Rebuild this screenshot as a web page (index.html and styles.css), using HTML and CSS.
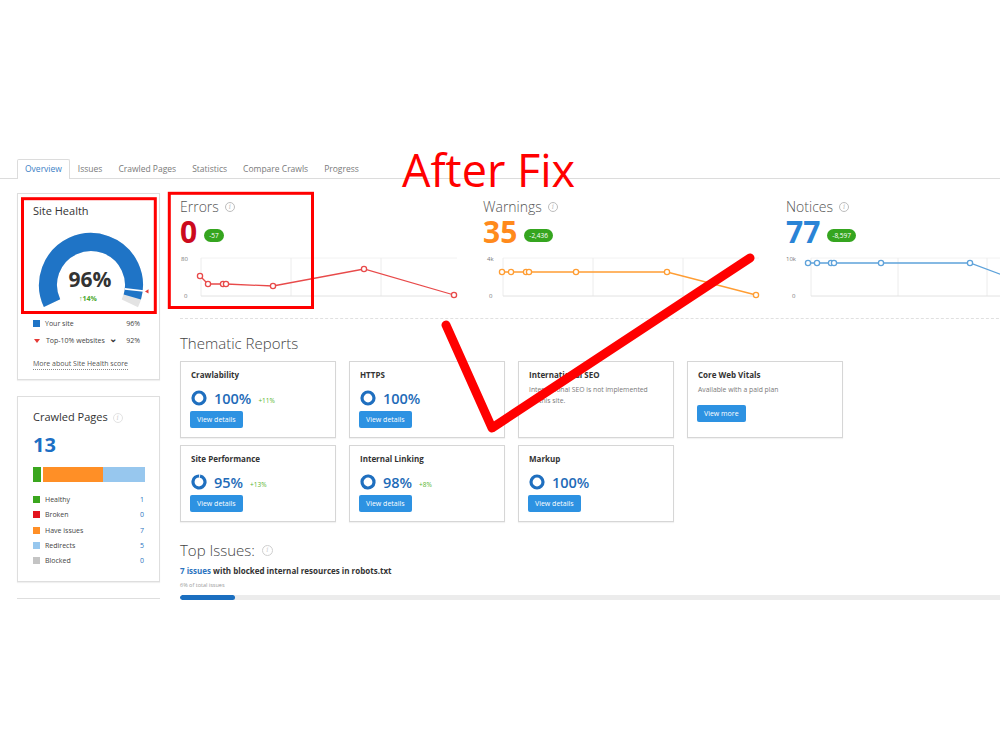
FILE: index.html
```html
<!DOCTYPE html>
<html lang="en">
<head>
<meta charset="utf-8">
<title>Site Audit – Overview</title>
<link rel="stylesheet" href="styles.css">
</head>
<body>
<div class="page">
  <nav class="tabs">
    <span class="tab active">Overview</span>
    <span class="tab">Issues</span>
    <span class="tab">Crawled Pages</span>
    <span class="tab">Statistics</span>
    <span class="tab">Compare Crawls</span>
    <span class="tab">Progress</span>
  </nav>

  <div class="layout">
    <aside class="side">
      <section class="card health">
        <h3 class="card-title">Site Health</h3>
        <svg class="gauge" width="111" height="86" viewBox="0 0 111 86">
          <g transform="rotate(155 58 59)">
            <circle cx="58" cy="59" r="43" fill="none" stroke="#e3e3e3" stroke-width="18" stroke-dasharray="172.6 400"/>
            <circle cx="58" cy="59" r="43" fill="none" stroke="#1f74c6" stroke-width="18" stroke-dasharray="165.7 400"/>
          </g>
          <line x1="91.8" y1="62.9" x2="110.7" y2="65" stroke="#fff" stroke-width="1.6"/>
          <path d="M112 65.4 L115.5 63.2 L115.5 67.6 Z" fill="#e53935"/>
          <text x="57" y="61" text-anchor="middle" class="gauge-value">96%</text>
          <text x="55" y="75" text-anchor="middle" class="gauge-delta">↑14%</text>
        </svg>
        <ul class="legend">
          <li><span class="swatch swatch-blue"></span>Your site<span class="legend-value">96%</span></li>
          <li><span class="tri-down"></span>Top-10% websites<span class="chev">&#8964;</span><span class="legend-value">92%</span></li>
        </ul>
        <a class="more-link">More about Site Health score</a>
      </section>

      <section class="card crawled">
        <h3 class="card-title">Crawled Pages <span class="info info-faint">i</span></h3>
        <div class="crawled-count">13</div>
        <div class="stack">
          <span class="seg seg-green" style="flex: 1"></span>
          <span class="seg seg-orange" style="flex: 7"></span>
          <span class="seg seg-light" style="flex: 5"></span>
        </div>
        <ul class="status-list">
          <li><span class="swatch swatch-green"></span>Healthy<span class="status-value">1</span></li>
          <li><span class="swatch swatch-red"></span>Broken<span class="status-value">0</span></li>
          <li><span class="swatch swatch-orange"></span>Have issues<span class="status-value">7</span></li>
          <li><span class="swatch swatch-light"></span>Redirects<span class="status-value">5</span></li>
          <li><span class="swatch swatch-grey"></span>Blocked<span class="status-value">0</span></li>
        </ul>
      </section>

      <section class="card stub"></section>
    </aside>

    <main class="main">
      <div class="metrics">
        <div class="metric">
          <div class="metric-label">Errors <span class="info">i</span></div>
          <div class="metric-row">
            <span class="metric-num num-red">0</span>
            <span class="badge">-57</span>
          </div>
          <svg class="chart" width="300" height="50" viewBox="0 0 300 50">
            <text x="1" y="8.5" class="axis">80</text>
            <text x="4" y="45.5" class="axis">0</text>
            <line x1="21" y1="6" x2="277" y2="6" class="grid-h"/>
            <line x1="21" y1="6" x2="21" y2="44" class="grid-v"/>
            <line x1="111" y1="6" x2="111" y2="44" class="grid-v"/>
            <line x1="201" y1="6" x2="201" y2="44" class="grid-v"/>
            <line x1="21" y1="44" x2="277" y2="44" class="base"/>
            <g class="series series-red">
              <polyline points="20,24 28,32 43,32 46,32 93,34 184,17 274,43"/>
              <circle cx="20" cy="24" r="2.6"/><circle cx="28" cy="32" r="2.6"/><circle cx="43" cy="32" r="2.6"/>
              <circle cx="46" cy="32" r="2.6"/><circle cx="93" cy="34" r="2.6"/><circle cx="184" cy="17" r="2.6"/>
              <circle cx="274" cy="43" r="2.6"/>
            </g>
          </svg>
        </div>

        <div class="metric">
          <div class="metric-label">Warnings <span class="info">i</span></div>
          <div class="metric-row">
            <span class="metric-num num-orange">35</span>
            <span class="badge">-2,436</span>
          </div>
          <svg class="chart" width="300" height="50" viewBox="0 0 300 50">
            <text x="4" y="8.5" class="axis">4k</text>
            <text x="6" y="45.5" class="axis">0</text>
            <line x1="20" y1="6" x2="276" y2="6" class="grid-h"/>
            <line x1="20" y1="6" x2="20" y2="44" class="grid-v"/>
            <line x1="110" y1="6" x2="110" y2="44" class="grid-v"/>
            <line x1="200" y1="6" x2="200" y2="44" class="grid-v"/>
            <line x1="20" y1="44" x2="276" y2="44" class="base"/>
            <g class="series series-orange">
              <polyline points="19,20 28,20 43,20 46,20 93,20 184,20 273,43"/>
              <circle cx="19" cy="20" r="2.6"/><circle cx="28" cy="20" r="2.6"/><circle cx="43" cy="20" r="2.6"/>
              <circle cx="46" cy="20" r="2.6"/><circle cx="93" cy="20" r="2.6"/><circle cx="184" cy="20" r="2.6"/>
              <circle cx="273" cy="43" r="2.6"/>
            </g>
          </svg>
        </div>

        <div class="metric">
          <div class="metric-label">Notices <span class="info">i</span></div>
          <div class="metric-row">
            <span class="metric-num num-blue">77</span>
            <span class="badge">-8,597</span>
          </div>
          <svg class="chart" width="300" height="50" viewBox="0 0 300 50">
            <text x="0" y="8.5" class="axis">10k</text>
            <text x="6" y="45.5" class="axis">0</text>
            <line x1="25" y1="6" x2="281" y2="6" class="grid-h"/>
            <line x1="25" y1="6" x2="25" y2="44" class="grid-v"/>
            <line x1="112" y1="6" x2="112" y2="44" class="grid-v"/>
            <line x1="201" y1="6" x2="201" y2="44" class="grid-v"/>
            <line x1="25" y1="44" x2="281" y2="44" class="base"/>
            <g class="series series-blue">
              <polyline points="22,11 31,11 45,11 48,11 95,11 184,11 273,44"/>
              <circle cx="22" cy="11" r="2.6"/><circle cx="31" cy="11" r="2.6"/><circle cx="45" cy="11" r="2.6"/>
              <circle cx="48" cy="11" r="2.6"/><circle cx="95" cy="11" r="2.6"/><circle cx="184" cy="11" r="2.6"/>
              <circle cx="273" cy="44" r="2.6"/>
            </g>
          </svg>
        </div>
      </div>

      <div class="divider"></div>

      <h2 class="section-title">Thematic Reports</h2>
      <div class="reports">
        <div class="report">
          <h4 class="report-title">Crawlability</h4>
          <div class="score">
            <svg class="ring" width="16" height="16" viewBox="0 0 16 16"><circle cx="8" cy="8" r="6" class="ring-track" stroke-dasharray="37.7 40"/></svg>
            <span class="score-value">100%</span><span class="score-delta">+11%</span>
          </div>
          <span class="btn">View details</span>
        </div>
        <div class="report">
          <h4 class="report-title">HTTPS</h4>
          <div class="score">
            <svg class="ring" width="16" height="16" viewBox="0 0 16 16"><circle cx="8" cy="8" r="6" class="ring-track" stroke-dasharray="37.7 40"/></svg>
            <span class="score-value">100%</span>
          </div>
          <span class="btn">View details</span>
        </div>
        <div class="report">
          <h4 class="report-title">International SEO</h4>
          <p class="report-note">International SEO is not implemented on this site.</p>
        </div>
        <div class="report">
          <h4 class="report-title">Core Web Vitals</h4>
          <p class="report-note">Available with a paid plan</p>
          <span class="btn btn-low">View more</span>
        </div>
        <div class="report">
          <h4 class="report-title">Site Performance</h4>
          <div class="score">
            <svg class="ring" width="16" height="16" viewBox="0 0 16 16"><circle cx="8" cy="8" r="6" class="ring-track" transform="rotate(-80 8 8)" stroke-dasharray="35.8 40"/></svg>
            <span class="score-value">95%</span><span class="score-delta">+13%</span>
          </div>
          <span class="btn">View details</span>
        </div>
        <div class="report">
          <h4 class="report-title">Internal Linking</h4>
          <div class="score">
            <svg class="ring" width="16" height="16" viewBox="0 0 16 16"><circle cx="8" cy="8" r="6" class="ring-track" transform="rotate(-85 8 8)" stroke-dasharray="36.9 40"/></svg>
            <span class="score-value">98%</span><span class="score-delta">+8%</span>
          </div>
          <span class="btn">View details</span>
        </div>
        <div class="report">
          <h4 class="report-title">Markup</h4>
          <div class="score">
            <svg class="ring" width="16" height="16" viewBox="0 0 16 16"><circle cx="8" cy="8" r="6" class="ring-track" stroke-dasharray="37.7 40"/></svg>
            <span class="score-value">100%</span>
          </div>
          <span class="btn">View details</span>
        </div>
      </div>

      <h2 class="section-title top-issues">Top Issues: <span class="info info-lg">i</span></h2>
      <p class="issue"><span class="issue-count">7 issues</span> with blocked internal resources in robots.txt</p>
      <p class="issue-share">6% of total issues</p>
      <div class="progress"><span class="progress-fill" style="width: 6%"></span></div>
    </main>
  </div>
</div>

<svg class="markup" width="1000" height="750" viewBox="0 0 1000 750">
  <rect x="22.5" y="198.7" width="132.8" height="113.8" class="mark-box"/>
  <rect x="169.3" y="193.3" width="143.2" height="114.2" class="mark-box"/>
  <polyline points="446,325 492,428 750,258" class="mark-check"/>
  <text x="402" y="187" class="mark-text">After Fix</text>
</svg>
</body>
</html>
```

FILE: styles.css
```css
* {
  box-sizing: border-box;
  margin: 0;
  padding: 0;
}

html,
body {
  width: 1000px;
  height: 750px;
  overflow: hidden;
  background: #fff;
}

body {
  position: relative;
  font-family: "Open Sans", "Noto Sans", sans-serif;
  color: #333;
}

ul {
  list-style: none;
}

/* ---------- tabs ---------- */
.page {
  padding-top: 159px;
}

.tabs {
  display: flex;
  align-items: flex-end;
  height: 20px;
  padding-left: 17px;
  border-bottom: 1px solid #dcdcdc;
}

.tab {
  height: 19px;
  padding: 0 7px;
  border: 1px solid transparent;
  border-bottom: none;
  font-size: 8.5px;
  line-height: 18px;
  color: #7a7a7a;
}

.tab.active {
  height: 20px;
  margin-bottom: -1px;
  background: #fff;
  border-color: #dcdcdc;
  border-radius: 2px 2px 0 0;
  color: #3d7fc6;
}

/* ---------- layout ---------- */
.layout {
  display: flex;
  align-items: flex-start;
}

.side {
  flex: 0 0 143px;
  width: 143px;
  min-width: 0;
  margin: 14px 0 0 17px;
  display: flex;
  flex-direction: column;
  gap: 16px;
}

.main {
  flex: 0 0 909px;
  margin-left: 20px;
  padding-top: 19px;
}

.card {
  border: 1px solid #dedede;
  box-shadow: 0 1px 1px rgba(0, 0, 0, 0.06);
  background: #fff;
}

.card-title {
  font-size: 11px;
  font-weight: 400;
  line-height: 14px;
  color: #333;
}

/* ---------- site health ---------- */
.health {
  height: 187px;
  padding: 10px 15px 0;
}

.gauge {
  display: block;
  margin-top: 8px;
  overflow: visible;
}

.gauge-value {
  font-size: 21px;
  font-weight: 700;
  fill: #333;
}

.gauge-delta {
  font-size: 7px;
  font-weight: 700;
  fill: #4ba82e;
}

.legend {
  margin-top: 3px;
}

.legend li {
  display: flex;
  align-items: center;
  height: 17px;
  font-size: 7px;
  color: #444;
}

.legend-value {
  margin-left: auto;
  padding-right: 4px;
}

.swatch {
  flex: 0 0 7px;
  width: 7px;
  height: 7px;
  margin-right: 5px;
}

.swatch-blue { background: #1f74c6; }
.swatch-green { background: #3aa61e; }
.swatch-red { background: #e3141e; }
.swatch-orange { background: #ff8f26; }
.swatch-light { background: #97c7ee; }
.swatch-grey { background: #c4c4c4; }

.tri-down {
  width: 0;
  height: 0;
  margin: 0 6px 0 1px;
  border-left: 3px solid transparent;
  border-right: 3px solid transparent;
  border-top: 4px solid #e53935;
}

.chev {
  margin: -5px 0 0 4px;
  font-size: 10px;
  font-weight: 700;
  color: #333;
}

.more-link {
  display: inline-block;
  margin-top: 4px;
  font-size: 7px;
  line-height: 11px;
  color: #555;
  border-bottom: 1px dotted #888;
}

/* ---------- crawled pages ---------- */
.crawled {
  height: 186px;
  padding: 13px 15px 0;
}

.info {
  display: inline-flex;
  align-items: center;
  justify-content: center;
  width: 10px;
  height: 10px;
  border: 1px solid #bdbdbd;
  border-radius: 50%;
  font-family: "DejaVu Serif", serif;
  font-size: 7px;
  font-style: italic;
  line-height: 1;
  color: #bdbdbd;
  vertical-align: middle;
}

.info-faint {
  margin-left: 2px;
  border-color: #e3e3e3;
  color: #cfcfcf;
}

.crawled-count {
  margin-top: 9px;
  font-size: 20px;
  font-weight: 700;
  line-height: 24px;
  color: #1d6fc4;
}

.stack {
  display: flex;
  width: 112px;
  height: 15px;
  margin-top: 10px;
}

.seg-green { background: #3aa61e; margin-right: 2px; }
.seg-orange { background: #ff8f26; }
.seg-light { background: #97c7ee; }

.status-list {
  margin-top: 10px;
}

.status-list li {
  display: flex;
  align-items: center;
  height: 15.25px;
  font-size: 7px;
  color: #444;
}

.status-value {
  margin-left: auto;
  color: #2c74c0;
}

.stub {
  height: 20px;
  border-width: 1px 0 0;
  box-shadow: none;
}

/* ---------- metrics ---------- */
.metrics {
  display: grid;
  grid-template-columns: repeat(3, 303px);
}

.metric-label {
  display: flex;
  align-items: center;
  gap: 6px;
  height: 18px;
  font-size: 14px;
  font-weight: 300;
  line-height: 18px;
  color: #555;
}

.metric-row {
  display: flex;
  align-items: center;
  margin-top: 1px;
  height: 30px;
}

.metric-num {
  font-size: 30px;
  font-weight: 700;
  line-height: 30px;
}

.num-red { color: #cc0a1e; }
.num-orange { color: #ff8a1c; }
.num-blue { color: #2a84d6; }

.badge {
  height: 13px;
  margin: 7px 0 0 7px;
  padding: 0 5px;
  border-radius: 7px;
  background: #35a51f;
  font-size: 6.5px;
  line-height: 13px;
  color: #fff;
}

.chart {
  display: block;
  margin-top: 5px;
  overflow: visible;
}

.axis {
  font-size: 6px;
  fill: #777;
}

.grid-h {
  stroke: #f2f2f2;
  stroke-width: 1;
}

.grid-v {
  stroke: #ececec;
  stroke-width: 1;
}

.base {
  stroke: #e2e2e2;
  stroke-width: 1;
}

.series polyline {
  fill: none;
  stroke-width: 1.3;
}

.series circle {
  fill: #fff;
  stroke-width: 1.3;
}

.series-red polyline,
.series-red circle { stroke: #e84a4a; }
.series-orange polyline,
.series-orange circle { stroke: #ff9d33; }
.series-blue polyline,
.series-blue circle { stroke: #5ea2da; }

.divider {
  margin-top: 16px;
  border-top: 1px dashed #e0e0e0;
}

/* ---------- thematic reports ---------- */
.section-title {
  display: flex;
  align-items: center;
  gap: 7px;
  margin-top: 14px;
  font-size: 15px;
  font-weight: 300;
  line-height: 20px;
  color: #444;
}

.reports {
  display: grid;
  grid-template-columns: repeat(4, 156px);
  column-gap: 13px;
  row-gap: 7px;
  margin-top: 8px;
}

.report {
  display: flex;
  flex-direction: column;
  align-items: flex-start;
  height: 77px;
  padding: 7px 10px 0;
  border: 1px solid #d6d6d6;
  box-shadow: 0 1px 1px rgba(0, 0, 0, 0.05);
}

.report-title {
  font-size: 8px;
  font-weight: 700;
  line-height: 12px;
  color: #333;
}

.report-note {
  margin-top: 3px;
  font-size: 6.8px;
  line-height: 11px;
  color: #7a7a7a;
  max-width: 126px;
}

.score {
  display: flex;
  align-items: center;
  height: 20px;
  margin-top: 7px;
}

.ring {
  display: block;
}

.ring-track {
  fill: none;
  stroke: #1f6fbf;
  stroke-width: 3.2;
}

.score-value {
  margin-left: 7px;
  font-size: 14.5px;
  font-weight: 600;
  color: #1e6bb8;
}

.score-delta {
  margin: 5px 0 0 7px;
  font-size: 6.5px;
  color: #5ab52d;
}

.btn {
  display: inline-block;
  height: 17px;
  margin: 3px 0 0 -1px;
  padding: 0 7px;
  border-radius: 2px;
  background: #2d92e2;
  font-size: 7px;
  line-height: 17px;
  color: #fff;
}

.btn-low {
  margin-top: 10px;
}

/* ---------- top issues ---------- */
.top-issues {
  margin-top: 18px;
}

.info-lg {
  width: 11px;
  height: 11px;
  border-color: #cfcfcf;
  color: #cfcfcf;
}

.issue {
  margin-top: 5px;
  font-size: 8px;
  font-weight: 700;
  line-height: 12px;
  color: #333;
}

.issue-count {
  color: #2c74c0;
}

.issue-share {
  margin-top: 3px;
  font-size: 5.5px;
  line-height: 10px;
  color: #999;
}

.progress {
  height: 5px;
  margin-top: 5px;
  border-radius: 3px;
  background: #ececec;
  overflow: hidden;
}

.progress-fill {
  display: block;
  height: 100%;
  border-radius: 3px;
  background: #1b6fc0;
}

/* ---------- red annotation layer ---------- */
.markup {
  position: absolute;
  top: 0;
  left: 0;
  pointer-events: none;
}

.mark-box {
  fill: none;
  stroke: #ff0000;
  stroke-width: 3;
}

.mark-check {
  fill: none;
  stroke: #ff0000;
  stroke-width: 9;
  stroke-linecap: round;
  stroke-linejoin: round;
}

.mark-text {
  font-family: "Open Sans", "Noto Sans", sans-serif;
  font-size: 45px;
  fill: #ff0000;
}
```
